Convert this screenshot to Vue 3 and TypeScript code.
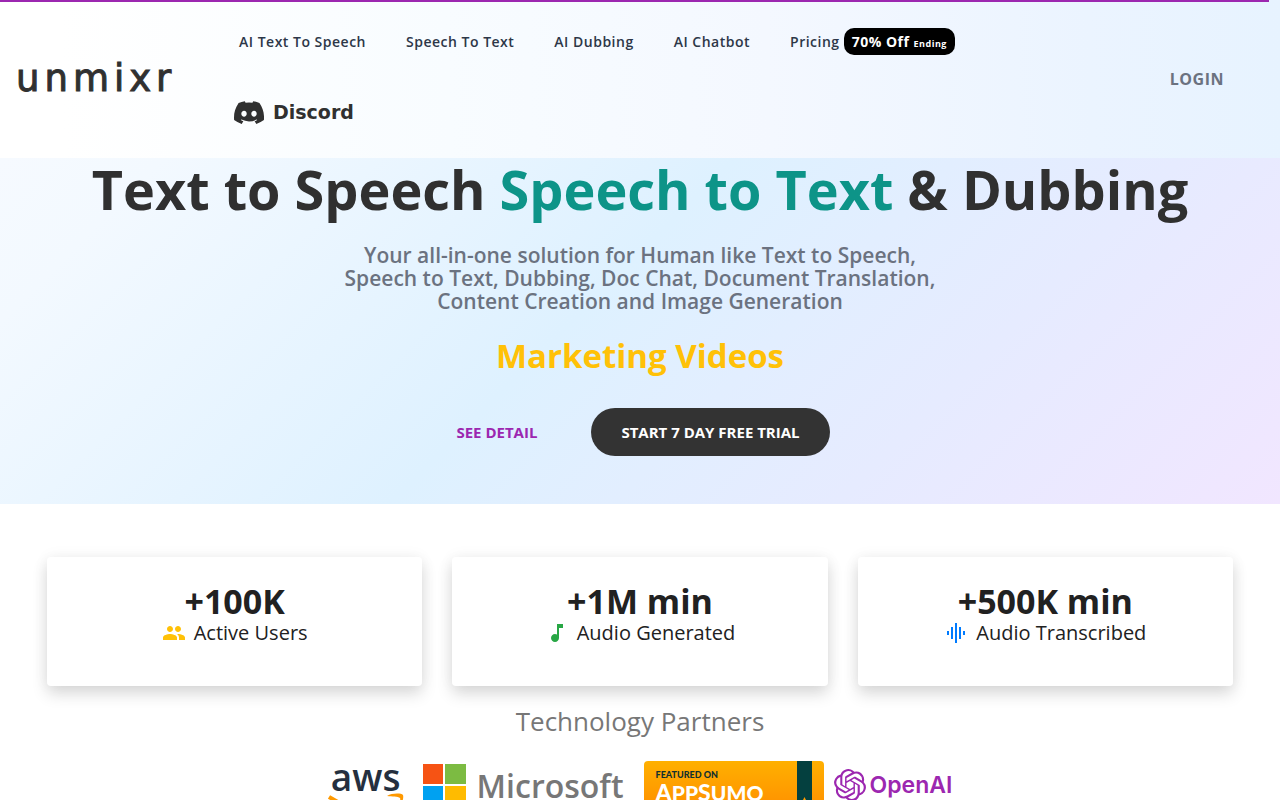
<script setup lang="ts">
interface NavLink {
  label: string
  href: string
}

interface Stat {
  value: string
  label: string
  color: string
  icon: string
}

const links: NavLink[] = [
  { label: 'AI Text To Speech', href: '#tts' },
  { label: 'Speech To Text', href: '#stt' },
  { label: 'AI Dubbing', href: '#dubbing' },
  { label: 'AI Chatbot', href: '#chatbot' },
]

const stats: Stat[] = [
  {
    value: '+100K',
    label: 'Active Users',
    color: '#ffc107',
    icon: 'M16 11c1.660 0 2.990-1.340 2.990-3S17.660 5 16 5s-3 1.340-3 3 1.340 3 3 3zm-8 0c1.660 0 2.990-1.340 2.990-3S9.660 5 8 5 5 6.340 5 8s1.340 3 3 3zm0 2c-2.330 0-7 1.170-7 3.500V19h14v-2.500c0-2.330-4.670-3.500-7-3.500zm8 0c-.290 0-.620.020-.970.050 1.160.840 1.970 1.970 1.970 3.450V19h6v-2.500c0-2.330-4.670-3.500-7-3.500z',
  },
  {
    value: '+1M min',
    label: 'Audio Generated',
    color: '#28a745',
    icon: 'M12 3v10.550c-.590-.340-1.270-.550-2-.550-2.210 0-4 1.790-4 4s1.790 4 4 4 4-1.790 4-4V7h4V3h-6z',
  },
  {
    value: '+500K min',
    label: 'Audio Transcribed',
    color: '#007bff',
    icon: 'M7 18h2V6H7v12zm4 4h2V2h-2v20zm-8-8h2v-4H3v4zm12 4h2V6h-2v12zm4-8v4h2v-4h-2z',
  },
]
</script>

<template>
  <div class="page">
    <div class="progress"></div>
    <div class="top">
      <header class="header">
        <a class="brand" href="#home">unmixr</a>
        <nav class="nav">
          <a v-for="link in links" :key="link.href" class="nav-link" :href="link.href">{{ link.label }}</a>
          <a class="nav-link pricing" href="#pricing"><span>Pricing</span> <span class="badge">70% Off <small>Ending</small></span></a>
          <a class="discord" href="#discord">
            <svg viewBox="0 0 127 96" width="30" height="23" aria-hidden="true">
              <path fill="currentColor" d="M107.700 8.070A105.150 105.150 0 0 0 81.470 0a72.060 72.060 0 0 0-3.360 6.830 97.680 97.680 0 0 0-29.110 0A72.370 72.370 0 0 0 45.640 0a105.890 105.890 0 0 0-26.250 8.090C2.790 32.650-1.710 56.600.540 80.210a105.730 105.730 0 0 0 32.170 16.150 77.700 77.700 0 0 0 6.890-11.110 68.420 68.420 0 0 1-10.850-5.180c.910-.660 1.800-1.340 2.660-2a75.570 75.570 0 0 0 64.320 0c.870.710 1.760 1.390 2.660 2a68.680 68.680 0 0 1-10.870 5.190 77 77 0 0 0 6.890 11.100 105.250 105.250 0 0 0 32.190-16.140c2.640-27.380-4.510-51.110-18.900-72.150zM42.450 65.690C36.180 65.690 31 60 31 53s5-12.740 11.430-12.740S54 46 53.890 53s-5.050 12.690-11.440 12.690zm42.240 0C78.410 65.690 73.250 60 73.250 53s5-12.740 11.440-12.740S96.230 46 96.120 53s-5.040 12.690-11.430 12.690z" />
            </svg>
            <span>Discord</span>
          </a>
        </nav>
        <a class="login" href="#login">LOGIN</a>
      </header>

      <section class="hero">
        <h1>Text to Speech <em>Speech to Text</em> &amp; Dubbing</h1>
        <p class="lead">
          Your all-in-one solution for Human like Text to Speech,<br />
          Speech to Text, Dubbing, Doc Chat, Document Translation,<br />
          Content Creation and Image Generation
        </p>
        <p class="rotating">Marketing Videos</p>
        <div class="actions">
          <button class="btn flat" type="button">SEE DETAIL</button>
          <button class="btn solid" type="button">START 7 DAY FREE TRIAL</button>
        </div>
      </section>
    </div>

    <section class="stats">
      <article v-for="stat in stats" :key="stat.label" class="card">
        <strong>{{ stat.value }}</strong>
        <p>
          <svg viewBox="0 0 24 24" width="24" height="24" aria-hidden="true">
            <path :d="stat.icon" :fill="stat.color" />
          </svg>
          <span>{{ stat.label }}</span>
        </p>
      </article>
    </section>

    <section class="partners">
      <h2>Technology Partners</h2>
      <div class="logos">
        <div class="aws">
          <span>aws</span>
          <svg viewBox="0 0 76 24" width="76" height="24" aria-hidden="true">
            <path d="M1 4C24 19 48 19 66 10" fill="none" stroke="#f90" stroke-width="4" />
            <path d="M59 3c5-3 14-3 16-1 1 3-1 10-6 14 2-5 4-9 3-11-2-2-8-1-13-2z" fill="#f90" />
          </svg>
        </div>
        <div class="microsoft">
          <svg viewBox="0 0 43 43" width="43" height="43" aria-hidden="true">
            <path fill="#f65314" d="M0 0h20v20H0z" />
            <path fill="#7cbb42" d="M22 0h21v20H22z" />
            <path fill="#00a1f1" d="M0 22h20v21H0z" />
            <path fill="#ffbb00" d="M22 22h21v21H22z" />
          </svg>
          <span>Microsoft</span>
        </div>
        <div class="appsumo">
          <div class="appsumo-text">
            <small>FEATURED ON</small>
            <b>A<i>PP</i>S<i>UMO</i></b>
          </div>
          <svg viewBox="0 0 15 54" width="15" height="54" aria-hidden="true">
            <path fill="#04403f" d="M0 0h15v54H0z" />
            <path fill="#ff9a00" d="M7.500 36l2.500 5 5 1-4 4 1 6-4.500-3-4.500 3 1-6-4-4 5-1z" />
          </svg>
        </div>
        <div class="openai">
          <svg viewBox="0 0 24 24" width="32" height="32" aria-hidden="true">
            <path fill="currentColor" d="M22.282 9.821a5.985 5.985 0 0 0-.516-4.910 6.046 6.046 0 0 0-6.510-2.900A6.065 6.065 0 0 0 4.981 4.182a5.985 5.985 0 0 0-3.998 2.900 6.046 6.046 0 0 0 .743 7.097 5.980 5.980 0 0 0 .510 4.911 6.051 6.051 0 0 0 6.515 2.900A5.985 5.985 0 0 0 13.260 24a6.056 6.056 0 0 0 5.772-4.206 5.990 5.990 0 0 0 3.997-2.900 6.056 6.056 0 0 0-.747-7.073zM13.260 22.430a4.476 4.476 0 0 1-2.876-1.040l.141-.081 4.779-2.758a.795.795 0 0 0 .392-.681v-6.737l2.020 1.168a.071.071 0 0 1 .038.052v5.583a4.504 4.504 0 0 1-4.494 4.494zM3.600 18.304a4.470 4.470 0 0 1-.535-3.014l.142.085 4.783 2.759a.771.771 0 0 0 .780 0l5.843-3.369v2.332a.080.080 0 0 1-.033.062L9.740 19.950a4.500 4.500 0 0 1-6.140-1.646zM2.340 7.896a4.485 4.485 0 0 1 2.366-1.973V11.600a.766.766 0 0 0 .388.676l5.815 3.355-2.020 1.168a.076.076 0 0 1-.071 0l-4.830-2.786A4.504 4.504 0 0 1 2.340 7.872zm16.597 3.855l-5.833-3.387L15.119 7.200a.076.076 0 0 1 .071 0l4.830 2.791a4.494 4.494 0 0 1-.676 8.105v-5.678a.790.790 0 0 0-.407-.667zm2.010-3.023l-.141-.085-4.774-2.782a.776.776 0 0 0-.785 0L9.409 9.230V6.897a.066.066 0 0 1 .028-.061l4.830-2.787a4.500 4.500 0 0 1 6.680 4.660zm-12.640 4.135l-2.020-1.164a.080.080 0 0 1-.038-.057V6.075a4.500 4.500 0 0 1 7.375-3.453l-.142.080L8.704 5.460a.795.795 0 0 0-.393.681zm1.097-2.365l2.602-1.500 2.607 1.500v2.999l-2.597 1.500-2.607-1.500z" />
          </svg>
          <span>OpenAI</span>
        </div>
      </div>
    </section>
  </div>
</template>

<style>
body {
  background: #fff;
}
</style>

<style scoped>
.page {
  font-family: 'Open Sans', 'Noto Sans', sans-serif;
  color: #212121;
}

.page * {
  box-sizing: border-box;
}

a {
  color: inherit;
  text-decoration: none;
}

.progress {
  position: absolute;
  top: 0;
  left: 0;
  width: calc(100% - 11px);
  height: 2px;
  background: #9c27b0;
}

.top {
  background: linear-gradient(135deg, #f9fbff 0%, #f3f9ff 18%, #def1ff 50%, #e6ebff 75%, #f1e6ff 100%);
}

.header {
  display: flex;
  align-items: center;
  min-height: 158px;
  padding: 0 56px 0 16px;
  background: linear-gradient(88deg, #ffffff 5%, #f8fcff 35%, #f4f8ff 60%, #ebf4ff 85%, #e7f3ff 100%);
}

.brand {
  flex: none;
  width: 203px;
  font-family: 'DejaVu Sans', sans-serif;
  font-size: 37px;
  line-height: 40px;
  letter-spacing: 5px;
  color: #303030;
  -webkit-text-stroke: 1px #303030;
}

.nav {
  display: flex;
  flex: 1;
  flex-wrap: wrap;
  align-items: center;
  max-width: 900px;
  row-gap: 44px;
  padding-bottom: 5px;
}

.nav-link {
  padding: 0 20px;
  font-size: 14px;
  line-height: 27px;
  font-weight: 600;
  letter-spacing: 0.5px;
  color: #2d3748;
}

.pricing {
  display: flex;
  gap: 4px;
}

.badge {
  height: 27px;
  padding: 0 8px;
  border-radius: 10px;
  background: #000;
  color: #fff;
  font-weight: 700;
}

.badge small {
  font-size: 9px;
  line-height: 12px;
}

.discord {
  display: flex;
  align-items: center;
  gap: 9px;
  padding: 0 15px;
  font-family: 'DejaVu Sans', sans-serif;
  font-size: 19px;
  line-height: 27px;
  font-weight: 700;
  color: #303030;
}

.login {
  margin-left: auto;
  font-size: 16px;
  line-height: 24px;
  font-weight: 700;
  letter-spacing: 0.5px;
  color: #6b7280;
}

.hero {
  display: flex;
  flex-direction: column;
  align-items: center;
  padding: 0 16px 48px;
  text-align: center;
}

h1 {
  margin: 0;
  font-size: 54px;
  line-height: 62px;
  font-weight: 700;
  color: #303030;
}

h1 em {
  font-style: normal;
  color: #0d9488;
}

.lead {
  margin: 24px 0 0;
  font-size: 21px;
  line-height: 23px;
  font-weight: 600;
  color: #6b7280;
}

.rotating {
  margin: 23px 0 0;
  font-size: 33px;
  line-height: 40px;
  font-weight: 700;
  color: #ffc107;
}

.actions {
  display: flex;
  gap: 48px;
  margin-top: 32px;
}

.btn {
  height: 48px;
  padding: 0 30px;
  border: 0;
  border-radius: 24px;
  background: transparent;
  font-family: inherit;
  font-size: 15px;
  line-height: 24px;
  font-weight: 700;
  color: #9c27b0;
}

.btn.flat {
  padding: 0 6px;
}

.btn.solid {
  background: #333;
  color: #fff;
}

.stats {
  display: grid;
  grid-template-columns: repeat(3, 1fr);
  gap: 30px;
  padding: 53px 47px 0;
}

.card {
  min-height: 129px;
  padding: 24px 16px;
  border-radius: 4px;
  box-shadow: 0 8px 16px rgba(0, 0, 0, 0.14), 0 0 16px rgba(0, 0, 0, 0.05);
  text-align: center;
}

.card strong {
  display: block;
  font-size: 34px;
  line-height: 40px;
  font-weight: 700;
}

.card p {
  display: flex;
  align-items: center;
  justify-content: center;
  gap: 8px;
  margin: 0;
  font-size: 20px;
  line-height: 24px;
}

.partners {
  padding: 15px 16px 0;
}

h2 {
  margin: 0;
  font-size: 26px;
  line-height: 40px;
  font-weight: 400;
  text-align: center;
  color: #777;
}

.logos {
  display: flex;
  justify-content: center;
  align-items: flex-start;
  padding-top: 20px;
}

.aws {
  display: flex;
  flex-direction: column;
  align-items: center;
  width: 76px;
  font-size: 37px;
  line-height: 32px;
  font-weight: 600;
  color: #252f3e;
}

.microsoft {
  display: flex;
  align-items: center;
  gap: 11px;
  margin: 3px 20px 0 19px;
  font-size: 32px;
  line-height: 42px;
  font-weight: 600;
  color: #777;
}

.appsumo {
  display: flex;
  justify-content: space-between;
  width: 180px;
  height: 54px;
  padding: 0 12px;
  border-radius: 4px;
  background: linear-gradient(#ffb000, #ff8c00);
}

.appsumo-text {
  display: flex;
  flex-direction: column;
  padding-top: 8px;
  font-family: Lato, sans-serif;
  color: #10302f;
}

.appsumo small {
  font-size: 9px;
  line-height: 12px;
  font-weight: 900;
}

.appsumo b {
  font-size: 23px;
  line-height: 22px;
  font-weight: 900;
  color: #fff;
}

.appsumo i {
  font-size: 21px;
  font-style: normal;
}

.openai {
  display: flex;
  align-items: center;
  gap: 4px;
  margin: 8px 0 0 10px;
  font-family: Inter, sans-serif;
  font-size: 23px;
  line-height: 32px;
  font-weight: 600;
  color: #9c27b0;
}
</style>
